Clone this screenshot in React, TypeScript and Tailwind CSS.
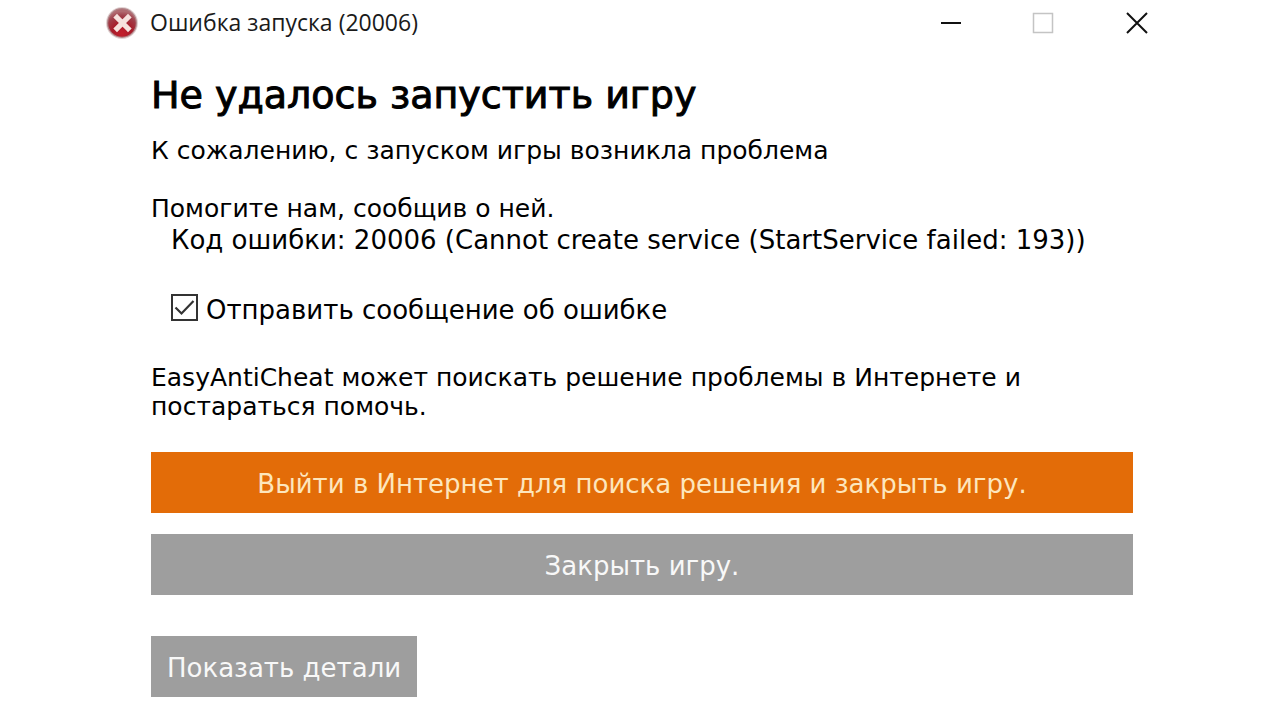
import { ReactNode, useState } from "react";

interface ActionButtonProps {
  children: ReactNode;
  className: string;
}

function ActionButton({ children, className }: ActionButtonProps) {
  return (
    <button
      type="button"
      className={`h-[61px] cursor-pointer px-4 pt-0.5 text-[26px] leading-8 ${className}`}
    >
      {children}
    </button>
  );
}

interface WindowButtonProps {
  label: string;
  disabled?: boolean;
  children: ReactNode;
}

function WindowButton({ label, disabled, children }: WindowButtonProps) {
  return (
    <button
      type="button"
      aria-label={label}
      disabled={disabled}
      className="flex h-[46px] w-[87px] items-center justify-center"
    >
      <svg className="size-6" viewBox="0 0 24 24" fill="none">
        {children}
      </svg>
    </button>
  );
}

function ErrorIcon() {
  return (
    <svg className="size-8" viewBox="0 0 32 32" aria-hidden="true">
      <defs>
        <radialGradient id="ball" cx="50%" cy="88%" r="80%">
          <stop offset="0" stopColor="#c41f2c" />
          <stop offset="0.45" stopColor="#a81c2a" />
          <stop offset="0.8" stopColor="#a03f4a" />
          <stop offset="1" stopColor="#b06a70" />
        </radialGradient>
      </defs>
      <circle cx="16" cy="16" r="16" fill="#e2d3d3" />
      <circle cx="16" cy="16" r="15" fill="#b08488" />
      <circle cx="16" cy="16" r="13.8" fill="url(#ball)" />
      <path
        d="M11 10.5l11 11m0-11l-11 11"
        stroke="#f6e2de"
        strokeWidth="5.2"
        strokeLinecap="square"
      />
    </svg>
  );
}

function TitleBar() {
  return (
    <header className="flex h-[46px] items-center pl-[6px]">
      <ErrorIcon />
      <h1 className="ml-3 flex-1 pb-0.5 font-['Open_Sans',sans-serif] text-[23px] leading-8 text-[#1a1a1a]">
        Ошибка запуска (20006)
      </h1>
      <div className="flex gap-1.5">
        <WindowButton label="Свернуть">
          <path d="M2 12h20" stroke="#111" strokeWidth="2" />
        </WindowButton>
        <WindowButton label="Развернуть" disabled>
          <path d="M1.5 2.5h19v19h-19z" stroke="#c4c4c4" strokeWidth="1.5" />
        </WindowButton>
        <WindowButton label="Закрыть">
          <path d="M2 2l20 20M22 2L2 22" stroke="#111" strokeWidth="2" />
        </WindowButton>
      </div>
    </header>
  );
}

export default function App() {
  const [sendReport, setSendReport] = useState(true);

  return (
    <div className="min-h-screen bg-white px-[100px] font-['DejaVu_Sans',sans-serif] text-black">
      <TitleBar />
      <main className="pr-[47px] pl-[51px] text-[25px] leading-[30px]">
        <h2 className="pt-6 text-[38px] leading-[50px] [-webkit-text-stroke:1px_black]">
          Не удалось запустить игру
        </h2>
        <p className="mt-4">К сожалению, с запуском игры возникла проблема</p>
        <p className="mt-7">Помогите нам, сообщив о ней.</p>
        <p className="pl-5 text-[26px] leading-8">
          Код ошибки: 20006 (Cannot create service (StartService failed: 193))
        </p>
        <label className="mt-[38px] flex items-start pl-5 text-[26px] leading-8">
          <span className="mr-2 grid size-[27px]">
            <input
              type="checkbox"
              className="peer col-start-1 row-start-1 appearance-none border-2 border-[#333] bg-white"
              checked={sendReport}
              onChange={(e) => setSendReport(e.target.checked)}
            />
            <svg
              className="pointer-events-none invisible col-start-1 row-start-1 peer-checked:visible"
              viewBox="0 0 27 27"
              fill="none"
            >
              <path d="M4.5 13.5l6 6L22.5 7" stroke="#333" strokeWidth="2.2" />
            </svg>
          </span>
          Отправить сообщение об ошибке
        </label>
        <p className="mt-[37px] leading-[29px]">
          EasyAntiCheat может поискать решение проблемы в Интернете и постараться помочь.
        </p>
        <div className="mt-[31px] flex flex-col gap-[21px]">
          <ActionButton className="bg-[#e36c08] text-[#fde6bd]">
            Выйти в Интернет для поиска решения и закрыть игру.
          </ActionButton>
          <ActionButton className="bg-[#9e9e9e] text-[#f8f8f8]">Закрыть игру.</ActionButton>
          <ActionButton className="mt-5 self-start bg-[#9e9e9e] text-[#f8f8f8]">
            Показать детали
          </ActionButton>
        </div>
      </main>
    </div>
  );
}
